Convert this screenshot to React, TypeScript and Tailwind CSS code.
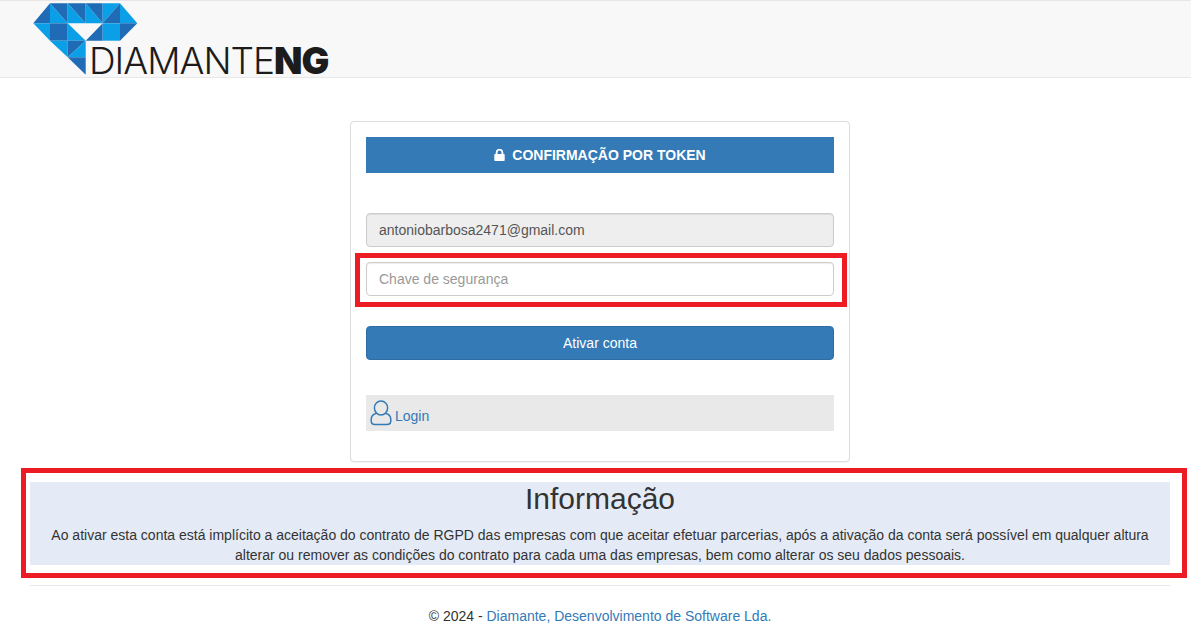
import React from "react";

const L = "#0a9fe6";
const D = "#1f6bb5";

const tris: [string, string][] = [
  ["33.3,23.3 50,3.3 50,23.3", D],
  ["50,3.3 67.7,23.3 50,23.3", L],
  ["50,3.3 67.7,3.3 67.7,23.3", D],
  ["67.7,3.3 85.7,23.3 67.7,23.3", L],
  ["67.7,3.3 85.7,3.3 85.7,23.3", D],
  ["85.7,3.3 102.7,23.3 85.7,23.3", L],
  ["85.7,3.3 102.7,3.3 102.7,23.3", D],
  ["102.7,3.3 120,3.3 102.7,23.3", L],
  ["120,3.3 120,23.3 102.7,23.3", D],
  ["120,3.3 137.3,23.3 120,23.3", L],
  ["33.3,23.3 50,23.3 50,40.7", L],
  ["50,23.3 67.7,23.3 67.7,40.7 50,40.7", D],
  ["67.7,23.3 67.7,40.7 85.7,40.7", L],
  ["102.7,23.3 102.7,40.7 85.7,40.7", D],
  ["102.7,23.3 120,23.3 120,40.7 102.7,40.7", L],
  ["120,23.3 137.3,23.3 120,40.7", D],
  ["50,40.7 67.7,40.7 67.7,57.3", L],
  ["67.7,40.7 85.7,40.7 67.7,57.3", D],
  ["85.7,40.7 85.7,57.3 67.7,57.3", L],
  ["67.7,57.3 85.7,57.3 85.7,74.7", D],
];

function Logo() {
  return (
    <svg width="300" height="76" viewBox="33 1 300 76" className="block overflow-visible">
      {tris.map(([p, c], i) => (
        <polygon key={i} points={p} fill={c} />
      ))}
      <text x="89" y="74" fontFamily="Inter, sans-serif" fontSize="37" fill="#1c1c1c" letterSpacing="-1">
        <tspan fontWeight="300">DIAMANTE</tspan>
        <tspan fontWeight="900">NG</tspan>
      </text>
    </svg>
  );
}

function LockIcon() {
  return (
    <svg width="11" height="12" viewBox="0 0 11 12" fill="none" className="block">
      <path d="M2.6 6V3.6a2.9 2.9 0 0 1 5.8 0V6" stroke="#fff" strokeWidth="1.8" />
      <rect x="0.3" y="5" width="10.4" height="7" rx="0.8" fill="#fff" />
    </svg>
  );
}

function UserIcon() {
  return (
    <svg width="22" height="26" viewBox="0 0 22 26" fill="none" stroke="#337ab7" strokeWidth="1.5" className="block">
      <ellipse cx="11" cy="8" rx="6.6" ry="7" />
      <path d="M6.5 13.2C3.5 14 1.2 16 1.2 19.5v1.2c0 2.2 1.6 3.8 3.8 3.8h12c2.2 0 3.8-1.6 3.8-3.8v-1.2c0-3.5-2.3-5.5-5.3-6.3" />
    </svg>
  );
}

export default function App() {
  return (
    <div className="min-h-[634px] w-full overflow-hidden bg-white font-['Liberation_Sans',Arial,sans-serif] text-[14px] leading-[20px] text-[#333]">
      <header className="h-[78px] border-y border-[#e7e7e7] bg-[#f8f8f8] pl-[33px]">
        <Logo />
      </header>

      <main className="ml-[15px] w-[1170px] px-[15px]">
        <section className="mx-auto mt-[43px] h-[341px] w-[500px] rounded-[4px] border border-[#ddd] bg-white px-[15px] pt-[15px] shadow-[0_1px_1px_rgba(0,0,0,0.05)]">
          <h2 className="flex h-[36px] items-center justify-center gap-[7px] bg-[#337ab7] text-[14px] font-bold uppercase text-white">
            <LockIcon />
            <span>Confirmação por token</span>
          </h2>

          <input
            readOnly
            disabled
            value="antoniobarbosa2471@gmail.com"
            className="mt-[40px] block h-[34px] w-full rounded-[4px] border border-[#ccc] bg-[#eee] px-[12px] text-[14px] text-[#555] shadow-[inset_0_1px_1px_rgba(0,0,0,0.075)]"
          />

          <div className="relative mt-[15px]">
            <input
              placeholder="Chave de segurança"
              className="block h-[34px] w-full rounded-[4px] border border-[#ccc] bg-white px-[12px] text-[14px] text-[#555] shadow-[inset_0_1px_1px_rgba(0,0,0,0.075)] placeholder:text-[#999]"
            />
            <div className="pointer-events-none absolute -top-[9px] -right-[13px] -bottom-[11px] -left-[11px] border-[5px] border-[#ed1c24]" />
          </div>

          <button className="mt-[30px] block h-[34px] w-full rounded-[4px] border border-[#2e6da4] bg-[#337ab7] text-[14px] text-white">
            Ativar conta
          </button>

          <div className="mt-[35px] flex h-[36px] items-center gap-[3px] bg-[#e9e9e9] pl-[4px]">
            <UserIcon />
            <a href="#" className="mt-[6px] text-[#337ab7]">Login</a>
          </div>
        </section>

        <section className="relative mt-[20px] bg-[#e5ebf6] px-[20px] text-center">
          <h1 className="mb-[10px] text-[30px] leading-[33px] font-medium text-[#333]">Informação</h1>
          <p className="text-[14px] leading-[20px]">
            Ao ativar esta conta está implícito a aceitação do contrato de RGPD das empresas com que aceitar efetuar parcerias, após a ativação da conta será possível em qualquer altura alterar ou remover as condições do contrato para cada uma das empresas, bem como alterar os seu dados pessoais.
          </p>
          <div className="pointer-events-none absolute -top-[14px] -right-[17px] -bottom-[13px] -left-[9px] border-[5px] border-[#ed1c24]" />
        </section>

        <hr className="mt-[20px] border-t border-[#e8e8e8]" />

        <footer className="mt-[20px] text-center">
          © 2024 - <a href="#" className="text-[#337ab7]">Diamante, Desenvolvimento de Software Lda.</a>
        </footer>
      </main>
    </div>
  );
}
